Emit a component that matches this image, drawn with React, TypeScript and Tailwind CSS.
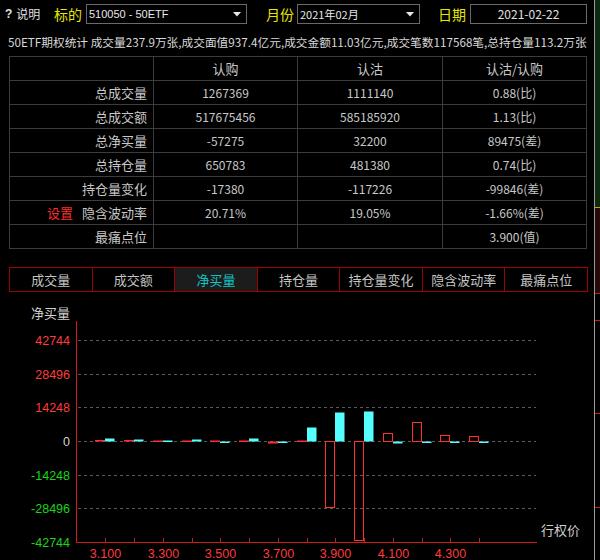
import React from "react";

const rows: string[][] = [
  ["", "认购", "认沽", "认沽/认购"],
  ["总成交量", "1267369", "1111140", "0.88(比)"],
  ["总成交额", "517675456", "585185920", "1.13(比)"],
  ["总净买量", "-57275", "32200", "89475(差)"],
  ["总持仓量", "650783", "481380", "0.74(比)"],
  ["持仓量变化", "-17380", "-117226", "-99846(差)"],
  ["隐含波动率", "20.71%", "19.05%", "-1.66%(差)"],
  ["最痛点位", "", "", "3.900(值)"],
];

const tabs = ["成交量", "成交额", "净买量", "持仓量", "持仓量变化", "隐含波动率", "最痛点位"];

// bar heights in px (positive = up)
const bars: { red: number; cyan: number }[] = [
  { red: 1.5, cyan: 3 },
  { red: 1.5, cyan: 2 },
  { red: 1, cyan: 1 },
  { red: 1, cyan: 2 },
  { red: 1, cyan: -1 },
  { red: 1, cyan: 3 },
  { red: -2, cyan: -1 },
  { red: 1, cyan: 14 },
  { red: -66, cyan: 29 },
  { red: -99, cyan: 30 },
  { red: 8, cyan: -2 },
  { red: 19, cyan: -1 },
  { red: 6, cyan: -1 },
  { red: 5, cyan: -1 },
];

function Arrow() {
  return (
    <svg width="8" height="5" viewBox="0 0 8 5" className="shrink-0">
      <path d="M0 0 L8 0 L4 4.5 Z" fill="#e8e8e8" />
    </svg>
  );
}

function Chart() {
  const Z = 149;
  const step = 33.67;
  const levels = [3, 2, 1, 0, -1, -2, -3];
  const labels: Record<number, string> = {
    3: "42744",
    2: "28496",
    1: "14248",
    0: "0",
    [-1]: "-14248",
    [-2]: "-28496",
    [-3]: "-42744",
  };
  const gy = (i: number) => Math.round(Z - i * step) + 0.5;
  const tick = (k: number) => Math.round(76.7 + k * 28.75);
  const zero = gy(0);
  return (
    <svg width="594" height="268" className="block">
      <text x="70" y="26" textAnchor="end" fill="#cfcfcf" fontSize="13" fontFamily="'Noto Sans CJK SC', sans-serif">
        净买量
      </text>
      {levels.map((i) =>
        i === -3 ? null : (
          <line key={i} x1="78" x2="536" y1={gy(i)} y2={gy(i)} stroke="#5a5a5a" strokeDasharray="3 3" />
        )
      )}
      {levels.map((i) => (
        <text
          key={"l" + i}
          x="70"
          y={gy(i) + 4.5}
          textAnchor="end"
          fontSize="12.5"
          fontFamily="'Liberation Sans', sans-serif"
          fill={i > 0 ? "#ff3b3b" : i < 0 ? "#19d419" : "#d0d0d0"}
        >
          {labels[i]}
        </text>
      ))}
      {bars.map((b, idx) => {
        const t = tick(idx + 1);
        const els: React.ReactNode[] = [];
        // red (call) bar, hollow
        const rh = Math.abs(b.red);
        if (rh <= 2.5) {
          const y = b.red >= 0 ? zero - rh : zero;
          els.push(<rect key="r" x={t - 10} y={y} width={10} height={Math.max(rh, 1.5)} fill="#ff3030" />);
        } else {
          const top = b.red >= 0 ? zero - b.red : zero;
          els.push(
            <rect key="r" x={t - 9.5} y={top} width={9} height={rh} fill="none" stroke="#ff3030" strokeWidth="1" />
          );
        }
        const ch = Math.abs(b.cyan);
        const cy = b.cyan >= 0 ? zero - ch : zero;
        els.push(<rect key="c" x={t} y={cy} width={9.5} height={Math.max(ch, 1.5)} fill="#55ffff" />);
        return <g key={idx}>{els}</g>;
      })}
      <line x1="76.5" x2="76.5" y1="29" y2="251" stroke="#d01818" />
      <line x1="76" x2="537" y1="250.5" y2="250.5" stroke="#d01818" />
      {Array.from({ length: 14 }, (_, i) => (
        <line key={"t" + i} x1={tick(i + 1) + 0.5} x2={tick(i + 1) + 0.5} y1="246" y2="250" stroke="#d01818" />
      ))}
      {["3.100", "3.300", "3.500", "3.700", "3.900", "4.100", "4.300"].map((s, i) => (
        <text
          key={s}
          x={tick(1 + i * 2) + 0.5}
          y="266"
          textAnchor="middle"
          fontSize="12.5"
          fontFamily="'Liberation Sans', sans-serif"
          fill="#ff3b3b"
        >
          {s}
        </text>
      ))}
      <text x="541" y="243" fill="#cfcfcf" fontSize="13" fontFamily="'Noto Sans CJK SC', sans-serif">
        行权价
      </text>
    </svg>
  );
}

export default function App() {
  return (
    <div className="w-[600px] h-[560px] bg-black flex overflow-hidden font-['Noto_Sans_CJK_SC',sans-serif] text-[#c8c8c8]">
      <div className="w-[594px] flex flex-col">
        {/* top bar */}
        <div className="flex items-center h-[20px] mt-[4px]">
          <div className="w-[50px] pl-[5px] flex items-center text-[12px] text-[#e0e0e0] leading-none">
            <span className="font-bold font-['Liberation_Sans',sans-serif]">?</span>
            <span className="ml-[4px]">说明</span>
          </div>
          <div className="w-[36px] pl-[4px] text-[14px] text-[#e6e600] leading-none">标的</div>
          <div className="w-[161px] h-[20px] border border-[#6a6a6a] flex items-center pl-[2px] pr-[5px] justify-between">
            <span className="text-[11px] text-[#e8e8e8] font-['Liberation_Sans',sans-serif] leading-none">510050 - 50ETF</span>
            <Arrow />
          </div>
          <div className="w-[50px] pl-[19px] text-[14px] text-[#e6e600] leading-none">月份</div>
          <div className="w-[123px] h-[20px] border border-[#6a6a6a] flex items-center pl-[2px] pr-[5px] justify-between">
            <span className="text-[11px] text-[#e8e8e8] leading-none">2021年02月</span>
            <Arrow />
          </div>
          <div className="w-[50px] pl-[18px] text-[14px] text-[#e6e600] leading-none">日期</div>
          <div className="w-[117px] h-[20px] border border-[#6a6a6a] flex items-center justify-center">
            <span className="text-[12px] text-[#e0e0e0] leading-none">2021-02-22</span>
          </div>
        </div>

        {/* stats line */}
        <div className="mt-[10px] h-[16px] pl-[8px] text-[11.7px] leading-[16px] text-[#d8d8d8] whitespace-nowrap">
          50ETF期权统计 成交量237.9万张,成交面值937.4亿元,成交金额11.03亿元,成交笔数117568笔,总持仓量113.2万张
        </div>

        {/* table */}
        <div className="ml-[9px] mt-[6px] w-[578px] grid grid-cols-[144px_144px_145px_144px] border-l border-t border-[#3c3c3c]">
          {rows.map((r, ri) =>
            r.map((c, ci) => (
              <div
                key={ri + "-" + ci}
                className={
                  "h-[24px] border-r border-b border-[#3c3c3c] flex items-center " +
                  (ci === 0 ? "justify-end pr-[6px] text-[13px]" : ri === 0 ? "justify-center text-[13px]" : "justify-center text-[12px]")
                }
              >
                {ri === 6 && ci === 0 ? (
                  <div className="flex w-full items-center pl-[37px]">
                    <span className="text-[#ff2a2a]">设置</span>
                    <span className="ml-auto">{c}</span>
                  </div>
                ) : (
                  c
                )}
              </div>
            ))
          )}
        </div>

        {/* tabs */}
        <div className="ml-[9px] mt-[18px] w-[579px] h-[25px] flex border border-[#a00000]">
          {tabs.map((t, i) => (
            <div
              key={t}
              className={
                "flex-1 flex items-center justify-center text-[13px] " +
                (i > 0 ? "border-l border-[#a00000] " : "") +
                (i === 2 ? "bg-[#1c1c1c] text-[#10c4c4]" : "text-[#c4c4c4]")
              }
            >
              {t}
            </div>
          ))}
        </div>

        <Chart />
      </div>
      <div className="w-px h-full bg-[#9a9a9a]" />
      <div className="w-[5px] h-full flex flex-col">
        <div className="h-[207px] bg-[#0c2a0e]" />
        <div className="h-px bg-[#c8a000]" />
        <div className="h-[85px] bg-[#260909]" />
        <div className="h-px bg-[#d01818]" />
        <div className="h-[26px]" />
        <div className="h-px bg-[#d01818]" />
        <div className="h-[92px]" />
        <div className="h-px bg-[#d01818]" />
        <div className="h-[93px]" />
        <div className="h-px bg-[#d01818]" />
      </div>
    </div>
  );
}
